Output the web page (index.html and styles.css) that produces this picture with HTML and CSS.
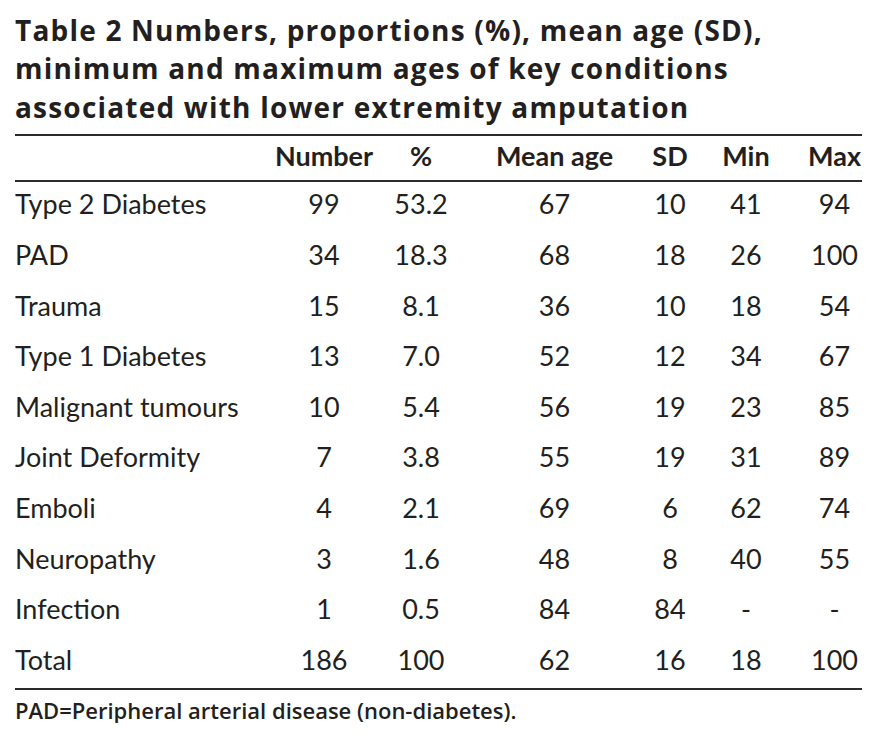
FILE: index.html
```html
<!DOCTYPE html>
<html lang="en">
<head>
<meta charset="utf-8">
<title>Table 2</title>
<link rel="stylesheet" href="styles.css">
</head>
<body>
<div class="page">
  <h1 class="caption">Table 2 Numbers, proportions (%), mean age (SD),<br>minimum and maximum ages of key conditions<br>associated with lower extremity amputation</h1>
  <table class="data">
    <colgroup>
      <col class="c-label">
      <col class="c-num">
      <col class="c-pct">
      <col class="c-mean">
      <col class="c-sd">
      <col class="c-min">
      <col class="c-max">
    </colgroup>
    <thead>
      <tr>
        <th class="label"></th>
        <th>Number</th>
        <th>%</th>
        <th>Mean age</th>
        <th>SD</th>
        <th>Min</th>
        <th class="last">Max</th>
      </tr>
    </thead>
    <tbody>
      <tr><td class="label">Type 2 Diabetes</td><td>99</td><td>53.2</td><td>67</td><td>10</td><td>41</td><td class="last">94</td></tr>
      <tr><td class="label">PAD</td><td>34</td><td>18.3</td><td>68</td><td>18</td><td>26</td><td class="last">100</td></tr>
      <tr><td class="label">Trauma</td><td>15</td><td>8.1</td><td>36</td><td>10</td><td>18</td><td class="last">54</td></tr>
      <tr><td class="label">Type 1 Diabetes</td><td>13</td><td>7.0</td><td>52</td><td>12</td><td>34</td><td class="last">67</td></tr>
      <tr><td class="label">Malignant tumours</td><td>10</td><td>5.4</td><td>56</td><td>19</td><td>23</td><td class="last">85</td></tr>
      <tr><td class="label">Joint Deformity</td><td>7</td><td>3.8</td><td>55</td><td>19</td><td>31</td><td class="last">89</td></tr>
      <tr><td class="label">Emboli</td><td>4</td><td>2.1</td><td>69</td><td>6</td><td>62</td><td class="last">74</td></tr>
      <tr><td class="label">Neuropathy</td><td>3</td><td>1.6</td><td>48</td><td>8</td><td>40</td><td class="last">55</td></tr>
      <tr><td class="label">Infection</td><td>1</td><td>0.5</td><td>84</td><td>84</td><td class="dash">-</td><td class="last dash">-</td></tr>
      <tr><td class="label">Total</td><td>186</td><td>100</td><td>62</td><td>16</td><td>18</td><td class="last">100</td></tr>
    </tbody>
  </table>
  <p class="footnote">PAD=Peripheral arterial disease (non-diabetes).</p>
</div>
</body>
</html>
```

FILE: styles.css
```css
html, body {
  margin: 0;
  padding: 0;
  background: #ffffff;
}

.page {
  width: 847px;
  padding: 10.5px 0 0 15px;
  color: #231f20;
  font-family: "Lato", "Open Sans", sans-serif;
}

.caption {
  margin: 0 0 7.4px 0;
  font-family: "Open Sans", "Noto Sans", sans-serif;
  font-weight: 700;
  font-size: 28px;
  line-height: 38.7px;
  letter-spacing: 1.2px;
  white-space: nowrap;
  color: #231f20;
}

.data {
  width: 847px;
  table-layout: fixed;
  border-collapse: separate;
  border-spacing: 0;
  font-size: 27px;
  line-height: 32.4px;
}

.c-label { width: 255px; }
.c-num { width: 108px; }
.c-pct { width: 86px; }
.c-mean { width: 181px; }
.c-sd { width: 50px; }
.c-min { width: 102px; }
.c-max { width: 65px; }

.data th {
  font-weight: 700;
  text-align: center;
  padding: 4.4px 0 7.2px 0;
  border-top: 2px solid #2b2b2b;
  border-bottom: 2px solid #2b2b2b;
  white-space: nowrap;
}

.data td {
  font-weight: 400;
  text-align: center;
  padding: 6.4px 0 11.8px 0;
  white-space: nowrap;
}

.data .label {
  text-align: left;
}

.data .last {
  padding-left: 10px;
}

.data tbody tr:last-child td {
  border-bottom: 2px solid #2b2b2b;
}

.footnote {
  margin: 7px 0 0 0;
  font-family: "Open Sans", "Noto Sans", sans-serif;
  font-weight: 600;
  font-size: 22px;
  line-height: 26px;
  letter-spacing: 0;
}
```
